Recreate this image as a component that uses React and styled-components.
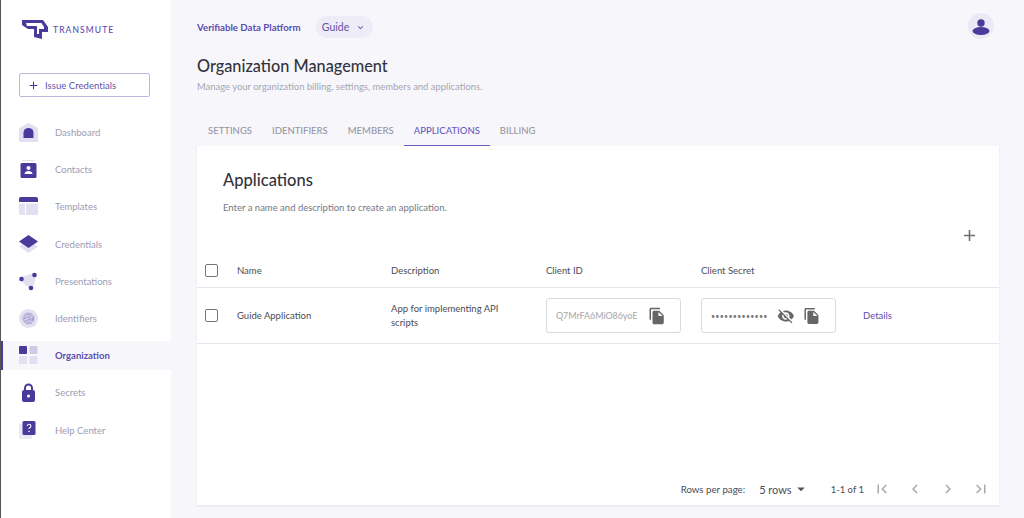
import styled, { createGlobalStyle } from "styled-components";
import {
  MdAdd,
  MdArrowDropDown,
  MdChevronLeft,
  MdChevronRight,
  MdFileCopy,
  MdFirstPage,
  MdKeyboardArrowDown,
  MdLastPage,
  MdVisibilityOff,
} from "react-icons/md";

const purple = "#4b3a9c";
const light = "#e3e0f1";

const GlobalStyle = createGlobalStyle`
  html, body {
    margin: 0;
    height: 100%;
    background: #f7f7fb;
    font-family: "Lato", "Noto Sans", sans-serif;
  }
`;

const DashboardIcon = () => (
  <svg width="19" height="19" viewBox="0 0 19 19">
    <path d="M0 5 9.5 0 19 5V18a1 1 0 0 1-1 1H1a1 1 0 0 1-1-1Z" fill={light} />
    <path d="M4.5 15V9.5a5 4.5 0 0 1 10 0V15Z" fill={purple} />
  </svg>
);

const ContactsIcon = () => (
  <svg width="19" height="19" viewBox="0 0 19 19">
    <rect x="3" y="0" width="13" height="1" fill={light} />
    <rect x="1.5" y="3" width="16" height="15" rx="1.5" fill={purple} />
    <circle cx="9.5" cy="8" r="2" fill="#fff" />
    <path d="M5.5 14c0-2 2-3 4-3s4 1 4 3Z" fill="#fff" />
  </svg>
);

const TemplatesIcon = () => (
  <svg width="19" height="19" viewBox="0 0 19 19">
    <path d="M0 2a2 2 0 0 1 2-2h15a2 2 0 0 1 2 2v3H0Z" fill={purple} />
    <path d="M0 6.5h6V18H1.5A1.5 1.5 0 0 1 0 16.5Z" fill={light} />
    <path d="M7 6.5h12v10a1.5 1.5 0 0 1-1.5 1.5H7Z" fill={light} />
  </svg>
);

const CredentialsIcon = () => (
  <svg width="19" height="19" viewBox="0 0 19 19">
    <path d="M0 11.5 9.5 5 19 11.5 9.5 18Z" fill={light} />
    <path d="M0 6.5 9.5 0 19 6.5 9.5 13Z" fill={purple} />
  </svg>
);

const PresentationsIcon = () => (
  <svg width="19" height="19" viewBox="0 0 19 19">
    <path d="M3 7 15.5 3 12 15.5Z" fill={light} stroke={light} strokeWidth="4" strokeLinejoin="round" />
    <circle cx="2.5" cy="7" r="2.3" fill={purple} />
    <circle cx="15.5" cy="3" r="2.3" fill={purple} />
    <circle cx="12" cy="16" r="2.3" fill={purple} />
  </svg>
);

const IdentifiersIcon = () => (
  <svg width="19" height="19" viewBox="0 0 19 19">
    <circle cx="9.5" cy="9.5" r="9.5" fill={light} />
    <g fill="none" stroke={purple} strokeWidth="0.8" opacity="0.6" strokeDasharray="3 0.8">
      <circle cx="9.5" cy="9.5" r="1.2" />
      <circle cx="9.5" cy="9.5" r="2.6" />
      <circle cx="9.5" cy="9.5" r="4" />
      <circle cx="9.5" cy="9.5" r="5.4" />
    </g>
  </svg>
);

const OrganizationIcon = () => (
  <svg width="19" height="19" viewBox="0 0 19 19">
    <rect x="0" y="0" width="8" height="8" rx="1" fill={purple} />
    <rect x="10.5" y="0" width="8" height="8" rx="1" fill="#cfcbe6" />
    <rect x="0" y="10" width="8" height="8" rx="1" fill={light} />
    <rect x="10.5" y="10" width="8" height="8" rx="1" fill={light} />
  </svg>
);

const SecretsIcon = () => (
  <svg width="19" height="19" viewBox="0 0 19 19">
    <path d="M6 8V5a3.5 3.5 0 0 1 7 0v3" fill="none" stroke={purple} strokeWidth="2" />
    <rect x="3" y="7" width="13" height="12" rx="2" fill={purple} />
    <circle cx="9.5" cy="13" r="1.5" fill="#fff" />
  </svg>
);

const HelpIcon = () => (
  <svg width="19" height="19" viewBox="0 0 19 19">
    <rect x="0" y="3" width="13" height="15" rx="1" fill={light} opacity="0.7" />
    <rect x="3.5" y="0" width="13" height="14" rx="1.5" fill={purple} />
    <path d="M8.3 5a1.8 1.8 0 1 1 2.4 1.8c-.6.3-.7.6-.7 1.3" fill="none" stroke="#fff" strokeWidth="1.1" />
    <circle cx="10" cy="10.5" r=".8" fill="#fff" />
  </svg>
);

const navItems = [
  { label: "Dashboard", Icon: DashboardIcon },
  { label: "Contacts", Icon: ContactsIcon },
  { label: "Templates", Icon: TemplatesIcon },
  { label: "Credentials", Icon: CredentialsIcon },
  { label: "Presentations", Icon: PresentationsIcon },
  { label: "Identifiers", Icon: IdentifiersIcon },
  { label: "Organization", Icon: OrganizationIcon, active: true },
  { label: "Secrets", Icon: SecretsIcon },
  { label: "Help Center", Icon: HelpIcon },
];

const tabs = ["Settings", "Identifiers", "Members", "Applications", "Billing"];

function App() {
  return (
    <Page>
      <GlobalStyle />
      <Sidebar>
        <Logo>
          <svg width="26" height="20" viewBox="0 0 26 20">
            <path d="M0 0H21L26 7V12H20V19L12 17V9H6L0 5Z" fill={purple} />
            <path d="M4 3H19.5L22 7V9H17V14H15V6H5Z" fill="#fff" />
          </svg>
          <LogoText>TRANSMUTE</LogoText>
        </Logo>
        <IssueButton>
          <MdAdd size={13} />
          Issue Credentials
        </IssueButton>
        <Nav>
          {navItems.map(({ label, Icon, active }) => (
            <NavItem key={label} $active={active}>
              <Icon />
              {label}
            </NavItem>
          ))}
        </Nav>
      </Sidebar>
      <Main>
        <TopBar>
          <Product>Verifiable Data Platform</Product>
          <Chip>
            Guide
            <MdKeyboardArrowDown size={11} />
          </Chip>
          <Avatar>
            <svg width="26" height="26" viewBox="0 0 26 26">
              <circle cx="13" cy="13" r="13" fill="#ebe9f5" />
              <circle cx="13" cy="10" r="3.7" fill={purple} />
              <ellipse cx="13" cy="18" rx="8.5" ry="4" fill={purple} />
            </svg>
          </Avatar>
        </TopBar>
        <Title>Organization Management</Title>
        <Subtitle>Manage your organization billing, settings, members and applications.</Subtitle>
        <Tabs>
          {tabs.map((tab) => (
            <Tab key={tab} $active={tab === "Applications"}>
              {tab}
            </Tab>
          ))}
        </Tabs>
        <Card>
          <CardHead>
            <CardTitle>Applications</CardTitle>
            <CardText>Enter a name and description to create an application.</CardText>
            <AddRow>
              <MdAdd size={19} color="#6f6f6f" />
            </AddRow>
          </CardHead>
          <HeadRow>
            <Checkbox />
            <span>Name</span>
            <span>Description</span>
            <span>Client ID</span>
            <span>Client Secret</span>
          </HeadRow>
          <BodyRow>
            <Checkbox />
            <span>Guide Application</span>
            <Description>App for implementing API scripts</Description>
            <Field>
              <ClientId>Q7MrFA6MiO86yoE</ClientId>
              <MdFileCopy size={18} color="#666" />
            </Field>
            <Field>
              <Dots>•••••••••••••</Dots>
              <MdVisibilityOff size={18} color="#666" />
              <MdFileCopy size={18} color="#666" />
            </Field>
            <Details>Details</Details>
          </BodyRow>
          <Footer>
            <RowsLabel>Rows per page:</RowsLabel>
            <RowsSelect>
              5 rows
              <MdArrowDropDown size={18} color="#555" />
            </RowsSelect>
            <Range>1-1 of 1</Range>
            <PageButtons>
              <MdFirstPage size={18} />
              <MdChevronLeft size={18} />
              <MdChevronRight size={18} />
              <MdLastPage size={18} />
            </PageButtons>
          </Footer>
        </Card>
      </Main>
    </Page>
  );
}

export default App;

const Page = styled.div`
  display: flex;
  height: 518px;
  overflow: hidden;
  border-left: 1px solid #555;
`;

const Sidebar = styled.aside`
  flex: 0 0 170px;
  background: #fff;
  display: flex;
  flex-direction: column;
`;

const Logo = styled.div`
  display: flex;
  align-items: center;
  gap: 5px;
  padding: 20px 0 0 21px;
  height: 20px;
`;

const LogoText = styled.span`
  color: #5c4db1;
  font-size: 8.5px;
  font-weight: 500;
  letter-spacing: 1.1px;
`;

const IssueButton = styled.button`
  display: flex;
  align-items: center;
  gap: 5px;
  width: 131px;
  height: 24px;
  margin: 33px 0 0 18px;
  padding: 0 0 0 7px;
  background: #fff;
  border: 1px solid #bdb6de;
  border-radius: 2px;
  color: #5f51a8;
  font-family: inherit;
  font-size: 9.5px;
  letter-spacing: 0.05px;

  svg {
    color: ${purple};
  }
`;

const Nav = styled.nav`
  display: flex;
  flex-direction: column;
  gap: 8.2px;
  margin-top: 21px;
`;

const NavItem = styled.div`
  display: flex;
  align-items: center;
  gap: 17px;
  height: 29px;
  padding-left: ${(p) => (p.$active ? "16px" : "18px")};
  border-left: ${(p) => (p.$active ? `2px solid ${purple}` : "none")};
  background: ${(p) => (p.$active ? "#f7f7fb" : "transparent")};
  color: ${(p) => (p.$active ? "#5c4db1" : "#9d9bb2")};
  font-size: 9.5px;
  font-weight: ${(p) => (p.$active ? 700 : 400)};
`;

const Main = styled.main`
  flex: 1;
  padding: 16px 25px 0 26px;
`;

const TopBar = styled.div`
  display: flex;
  align-items: center;
  height: 22px;
`;

const Product = styled.span`
  color: #5c4db1;
  font-size: 9.7px;
  font-weight: 700;
`;

const Chip = styled.div`
  display: flex;
  align-items: center;
  justify-content: center;
  gap: 6px;
  width: 57px;
  height: 22px;
  margin-left: 15px;
  border-radius: 11px;
  background: #eeecf6;
  color: #5f51a8;
  font-size: 10.5px;
`;

const Avatar = styled.div`
  display: flex;
  margin-left: auto;
  margin-right: 5px;
  margin-top: -2px;
`;

const Title = styled.h1`
  margin: 17px 0 0;
  color: #33333b;
  font-size: 16.3px;
  font-weight: 500;
  line-height: 22px;
`;

const Subtitle = styled.p`
  margin: 4px 0 0;
  color: #a5a5b2;
  font-size: 9.45px;
  line-height: 12px;
`;

const Tabs = styled.div`
  display: flex;
  margin: 23px 0 0 1px;
`;

const Tab = styled.div`
  display: flex;
  align-items: center;
  height: 29px;
  padding: 0 10px;
  border-bottom: 1px solid ${(p) => (p.$active ? "#6a5bbd" : "transparent")};
  color: ${(p) => (p.$active ? "#6a5bbd" : "#9595a5")};
  font-size: 9.5px;
  font-weight: 500;
  text-transform: uppercase;
`;

const Card = styled.section`
  height: 359px;
  display: flex;
  flex-direction: column;
  background: #fff;
  box-shadow: 0 1px 2px rgba(0, 0, 0, 0.08);
`;

const CardHead = styled.div`
  padding: 24px 20px 0 26px;
`;

const CardTitle = styled.h2`
  margin: 0;
  color: #33333b;
  font-size: 16.5px;
  font-weight: 500;
  line-height: 20px;
`;

const CardText = styled.p`
  margin: 12px 0 0;
  color: #777783;
  font-size: 9.5px;
  line-height: 12px;
`;

const AddRow = styled.div`
  display: flex;
  justify-content: flex-end;
  margin-top: 12px;
  height: 19px;
`;

const HeadRow = styled.div`
  display: grid;
  grid-template-columns: 32px 154px 155px 155px 1fr;
  align-items: center;
  box-sizing: content-box;
  height: 33px;
  margin-top: 8px;
  padding: 1px 0 0 8px;
  border-bottom: 1px solid #e6e6ea;
  color: #4c4c55;
  font-size: 9.5px;
`;

const BodyRow = styled.div`
  display: grid;
  grid-template-columns: 32px 154px 155px 155px 162px 1fr;
  align-items: center;
  height: 55px;
  padding-left: 8px;
  border-bottom: 1px solid #e6e6ea;
  color: #4c4c55;
  font-size: 9.5px;
`;

const Checkbox = styled.span`
  display: block;
  width: 11px;
  height: 11px;
  border: 1.5px solid #777;
  border-radius: 2px;
`;

const Description = styled.span`
  width: 120px;
  line-height: 14px;
`;

const Field = styled.div`
  display: flex;
  align-items: center;
  gap: 9px;
  box-sizing: border-box;
  width: 135px;
  height: 35px;
  padding: 0 14px 0 9px;
  border: 1px solid #d9d9df;
  border-radius: 3px;
`;

const ClientId = styled.span`
  flex: 1;
  min-width: 0;
  color: #a6a6a6;
  font-size: 8.9px;
  white-space: nowrap;
`;

const Dots = styled.span`
  flex: 1;
  color: #777;
  font-size: 7px;
  letter-spacing: 0.3px;
  white-space: nowrap;
`;

const Details = styled.span`
  color: #5c4db1;
`;

const Footer = styled.div`
  display: flex;
  align-items: center;
  justify-content: flex-end;
  height: 30px;
  margin-top: auto;
  margin-bottom: 1px;
  padding-right: 9px;
  color: #4c4c55;
`;

const RowsLabel = styled.span`
  font-size: 9.7px;
`;

const RowsSelect = styled.div`
  display: flex;
  align-items: center;
  margin-left: 14px;
  font-size: 11px;
`;

const Range = styled.span`
  margin-left: 21px;
  font-size: 9.5px;
`;

const PageButtons = styled.div`
  display: flex;
  gap: 15px;
  margin-left: 9px;
  color: #a8a8ae;
`;
